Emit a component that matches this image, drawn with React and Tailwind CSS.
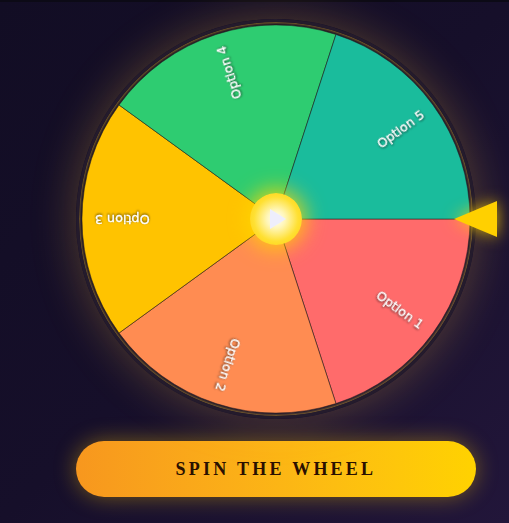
import { useState } from 'react'

const OPTIONS = [
  { label: 'Option 1', color: '#ff6b6b' },
  { label: 'Option 2', color: '#ff8c52' },
  { label: 'Option 3', color: '#ffc300' },
  { label: 'Option 4', color: '#2ecc71' },
  { label: 'Option 5', color: '#1abc9c' },
]

const R = 197

function slicePath(i, n) {
  const a0 = (i * 2 * Math.PI) / n
  const a1 = ((i + 1) * 2 * Math.PI) / n
  const x0 = R * Math.cos(a0)
  const y0 = R * Math.sin(a0)
  const x1 = R * Math.cos(a1)
  const y1 = R * Math.sin(a1)
  return `M0 0 L${x0} ${y0} A${R} ${R} 0 0 1 ${x1} ${y1} Z`
}

function Wheel({ rotation }) {
  const n = OPTIONS.length
  return (
    <svg viewBox="-200 -200 400 400" className="w-full h-full" style={{ transform: `rotate(${rotation}deg)` }}>
      {OPTIONS.map((o, i) => (
        <path key={o.label} d={slicePath(i, n)} fill={o.color} stroke="rgba(40,30,30,0.55)" strokeWidth="1" />
      ))}
      {OPTIONS.map((o, i) => {
        const mid = ((i + 0.5) * 360) / n
        return (
          <text
            key={o.label}
            transform={`rotate(${mid})`}
            x="184"
            y="0"
            textAnchor="end"
            dominantBaseline="central"
            fill="#fff"
            fontSize="13"
            fontFamily="'DejaVu Sans', sans-serif"
            stroke="#fff"
            strokeWidth="0.35"
            style={{ filter: 'drop-shadow(0 1px 1px rgba(0,0,0,0.6))' }}
          >
            {o.label}
          </text>
        )
      })}
    </svg>
  )
}

export default function App() {
  const [rotation, setRotation] = useState(0)

  return (
    <div className="min-h-[523px] w-full bg-gradient-to-br from-[#120d24] via-[#160f2a] to-[#22163a] border-t-2 border-[#0c0a16]">
      <div className="w-[400px] ml-[76px] pt-[17px] flex flex-col">
        {/* wheel */}
        <div className="relative w-[400px] h-[400px]">
          <div className="w-full h-full rounded-full border-[3px] border-[#241b2c] shadow-[0_0_45px_rgba(255,190,60,0.28),inset_0_0_3px_1px_rgba(230,180,40,0.6)] overflow-hidden">
            <Wheel rotation={rotation} />
          </div>

          {/* hub */}
          <div className="absolute left-1/2 top-1/2 -translate-x-1/2 -translate-y-1/2 w-[52px] h-[52px] rounded-full bg-[radial-gradient(circle,#ffffff_0%,#fff6b8_25%,#ffe033_60%,#ffcc00_100%)] shadow-[0_0_20px_4px_rgba(255,215,0,0.8)] flex items-center justify-center">
            <svg width="16" height="20" viewBox="0 0 16 20" className="ml-[3px]">
              <path d="M0 0 L16 10 L0 20 Z" fill="#eeeefc" />
            </svg>
          </div>

          {/* pointer */}
          <div className="absolute right-[-21px] top-1/2 -translate-y-1/2 drop-shadow-[0_0_8px_rgba(255,210,0,0.8)]">
            <svg width="43" height="36" viewBox="0 0 43 36">
              <path d="M0 18 L43 0 L43 36 Z" fill="#ffd000" />
            </svg>
          </div>
        </div>

        {/* spin button */}
        <button
          onClick={() => setRotation((r) => r + 1440 + Math.random() * 360)}
          className="mt-[22px] h-[56px] w-[400px] rounded-full bg-gradient-to-r from-[#f7971e] to-[#ffd200] shadow-[0_0_22px_rgba(255,200,0,0.4)] text-[#2a1000] font-bold text-[18px] tracking-[0.18em] font-['Liberation_Serif',serif]"
        >
          SPIN THE WHEEL
        </button>
      </div>
    </div>
  )
}
